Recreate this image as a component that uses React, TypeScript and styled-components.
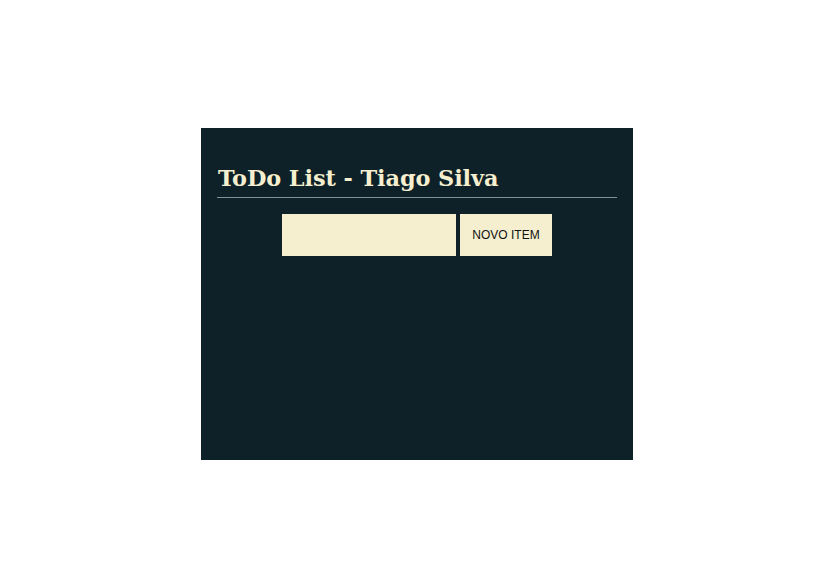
import React from "react";
import styled, { createGlobalStyle } from "styled-components";

const Global = createGlobalStyle`
  html, body { margin: 0; padding: 0; background: #ffffff; }
  body { font-family: "Liberation Sans", Arial, sans-serif; }
`;

const Page = styled.div`
  width: 821px;
  height: 569px;
  padding-top: 128px;
  padding-left: 201px;
  box-sizing: border-box;
`;

const Panel = styled.div`
  width: 432px;
  height: 332px;
  background: #0e2129;
  box-sizing: border-box;
  padding: 35px 16px 0 16px;
`;

const Title = styled.h1`
  margin: 0;
  padding: 0 0 4px 1px;
  font-family: "DejaVu Serif", serif;
  font-weight: bold;
  font-size: 22.4px;
  line-height: 30px;
  letter-spacing: -0.07px;
  color: #f5efcf;
  border-bottom: 1px solid #7f9194;
`;

const Form = styled.div`
  display: flex;
  justify-content: center;
  gap: 4px;
  margin-top: 16px;
`;

const Input = styled.input`
  width: 174px;
  height: 42px;
  box-sizing: border-box;
  border: none;
  background: #f5efcf;
  outline: none;
  padding: 0 8px;
`;

const Button = styled.button`
  width: 92px;
  height: 42px;
  border: none;
  background: #f5efcf;
  font-family: "Liberation Sans", Arial, sans-serif;
  font-size: 12px;
  color: #111;
  padding: 0;
`;

export default function App() {
  return (
    <>
      <Global />
      <Page>
        <Panel>
          <Title>ToDo List - Tiago Silva</Title>
          <Form>
            <Input />
            <Button>NOVO ITEM</Button>
          </Form>
        </Panel>
      </Page>
    </>
  );
}
